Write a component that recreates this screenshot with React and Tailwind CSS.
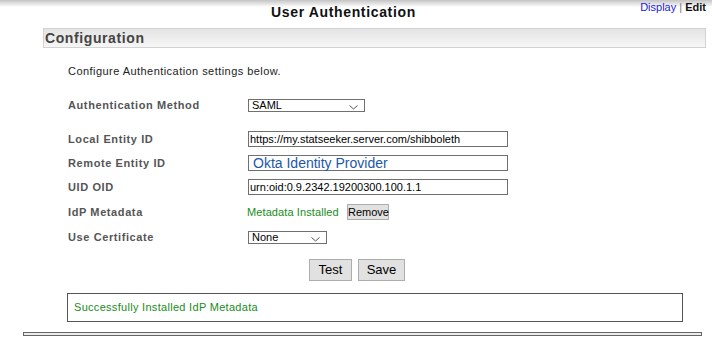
import React from "react";

function Chevron() {
  return (
    <svg width="9" height="5" viewBox="0 0 9 5" className="absolute right-[6px] bottom-[1px]">
      <polyline points="0.5,0.5 4.5,4 8.5,0.5" fill="none" stroke="#555" strokeWidth="1" />
    </svg>
  );
}

function Select({ value, w }) {
  return (
    <div className={`relative h-[13px] border border-[#707070] bg-white text-[11px] leading-[11px] text-black pl-[3px] ${w}`}>
      {value}
      <Chevron />
    </div>
  );
}

function Label({ children }) {
  return (
    <div className="w-[180px] shrink-0 text-[11px] font-bold text-[#555] tracking-[0.6px]">{children}</div>
  );
}

export default function App() {
  return (
    <div className="w-[712px] h-[345px] overflow-hidden bg-[linear-gradient(#c4c4c4,#ffffff_7px)] font-['Liberation_Sans',Arial,sans-serif]">
      <div className="flex h-[28px]">
        <div className="ml-[271px] pt-[4px] text-[14px] leading-[16px] font-bold text-[#111] tracking-[0.65px]">
          User Authentication
        </div>
        <div className="ml-auto mr-[6px] pt-[1px] text-[11px] leading-[12px] text-[#333]">
          <span className="text-[#2222dd]">Display</span>
          <span className="text-[#777]"> | </span>
          <span className="font-bold text-[#111]">Edit</span>
        </div>
      </div>

      <div className="ml-[43px] w-[663px] h-[20px] border border-[#d2d2d2] bg-[linear-gradient(#e4e4e4,#f6f6f6)] pl-[1px] text-[14px] leading-[18px] font-bold text-[#444] tracking-[0.6px]">
        Configuration
      </div>

      <div className="pl-[68px] flex flex-col">
        <div className="mt-[17px] h-[13px] text-[11px] leading-[13px] text-[#222] tracking-[0.45px]">
          Configure Authentication settings below.
        </div>

        <div className="mt-[21px] flex items-center h-[13px]">
          <Label>Authentication Method</Label>
          <Select value="SAML" w="w-[117px]" />
        </div>

        <div className="mt-[19px] flex items-center h-[16px]">
          <Label>Local Entity ID</Label>
          <div className="w-[260px] h-[16px] border border-[#707070] bg-white pl-[1px] text-[11px] leading-[14px] text-black">
            https://my.statseeker.server.com/shibboleth
          </div>
        </div>

        <div className="mt-[8px] flex items-center h-[16px]">
          <Label>Remote Entity ID</Label>
          <div className="w-[260px] h-[16px] border border-[#707070] bg-white pl-[4px] text-[14px] leading-[14px] text-[#1d57a8]">
            Okta Identity Provider
          </div>
        </div>

        <div className="mt-[8px] flex items-center h-[16px]">
          <Label>UID OID</Label>
          <div className="w-[260px] h-[16px] border border-[#707070] bg-white pl-[1px] text-[11px] leading-[14px] text-black">
            urn:oid:0.9.2342.19200300.100.1.1
          </div>
        </div>

        <div className="mt-[9px] flex items-center h-[16px]">
          <Label>IdP Metadata</Label>
          <div className="-ml-[1px] w-[91px] whitespace-nowrap text-[11px] text-[#1a8c1a] tracking-[0.1px]">Metadata Installed</div>
          <div className="ml-[9px] h-[16px] w-[42px] border border-[#adadad] bg-[#e1e1e1] text-[11px] leading-[14px] text-black text-center">
            Remove
          </div>
        </div>

        <div className="mt-[11px] flex items-center h-[12px]">
          <Label>Use Certificate</Label>
          <Select value="None" w="w-[79px]" />
        </div>

        <div className="mt-[16px] flex h-[22px] ml-[241px] gap-[6px]">
          <div className="w-[43px] h-[22px] border border-[#adadad] bg-[#e1e1e1] text-[13px] leading-[20px] text-black text-center">
            Test
          </div>
          <div className="w-[47px] h-[22px] border border-[#adadad] bg-[#e1e1e1] text-[13px] leading-[20px] text-black text-center">
            Save
          </div>
        </div>
      </div>

      <div className="mt-[12px] ml-[67px] w-[616px] h-[29px] border border-[#555] pl-[6px] text-[11px] leading-[27px] text-[#1a8c1a] tracking-[0.3px]">
        Successfully Installed IdP Metadata
      </div>

      <div className="mt-[10px] ml-[23px] w-[679px] h-[4px] border border-[#666] bg-[#ececec]"></div>
    </div>
  );
}
